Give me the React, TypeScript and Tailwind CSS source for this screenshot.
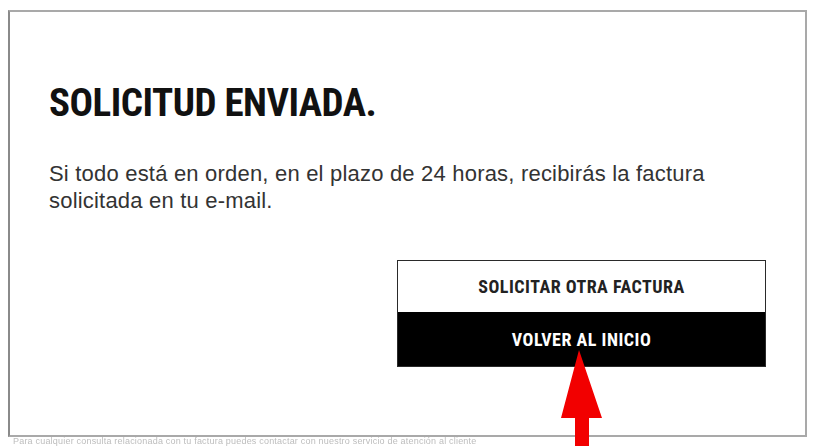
export default function App() {
  return (
    <div className="relative h-[446px] w-[815px] overflow-hidden bg-white pl-[8px] pt-[10px] font-['Liberation_Sans',Arial,sans-serif]">
      <div className="flex h-[427px] w-[799px] flex-col border-2 border-[#a9a9a9] border-l-[#8a8a8a] px-[39px] pt-[72px]">
        <h1
          className="text-[39px] font-bold leading-none tracking-[-0.5px] text-[#111] font-['Liberation_Sans_Narrow','Roboto_Condensed',Roboto,sans-serif]"
          style={{ fontStretch: 'condensed' }}
        >
          SOLICITUD ENVIADA.
        </h1>
        <p className="mt-[37px] text-[22px] leading-[27px] tracking-[0.2px] text-[#333]">
          Si todo está en orden, en el plazo de 24 horas, recibirás la factura
          <br />
          solicitada en tu e-mail.
        </p>
        <div className="mt-[46px] flex justify-end">
          <div
            className="flex w-[369px] flex-col border border-[#2a2a2a] font-['Liberation_Sans_Narrow','Roboto_Condensed',Roboto,sans-serif]"
            style={{ fontStretch: 'condensed' }}
          >
            <button className="flex h-[51px] items-center justify-center bg-white text-[18px] font-bold tracking-[0.5px] text-[#222]">
              SOLICITAR OTRA FACTURA
            </button>
            <button className="flex h-[54px] items-center justify-center bg-black text-[18px] font-bold tracking-[0.5px] text-white">
              VOLVER AL INICIO
            </button>
          </div>
        </div>
      </div>
      <p className="whitespace-nowrap pl-[5px] text-[9px] leading-[8px] tracking-[0.2px] text-[#bdbdbd] blur-[0.5px]">
        Para cualquier consulta relacionada con tu factura puedes contactar con nuestro servicio de atención al cliente
      </p>
      <svg className="absolute left-[560px] top-[350px]" width="44" height="96" viewBox="0 0 44 96">
        <path d="M19 0 L42 68 L29 68 L29 96 L15 96 L15 68 L1 68 Z" fill="#f20000" />
      </svg>
    </div>
  );
}
